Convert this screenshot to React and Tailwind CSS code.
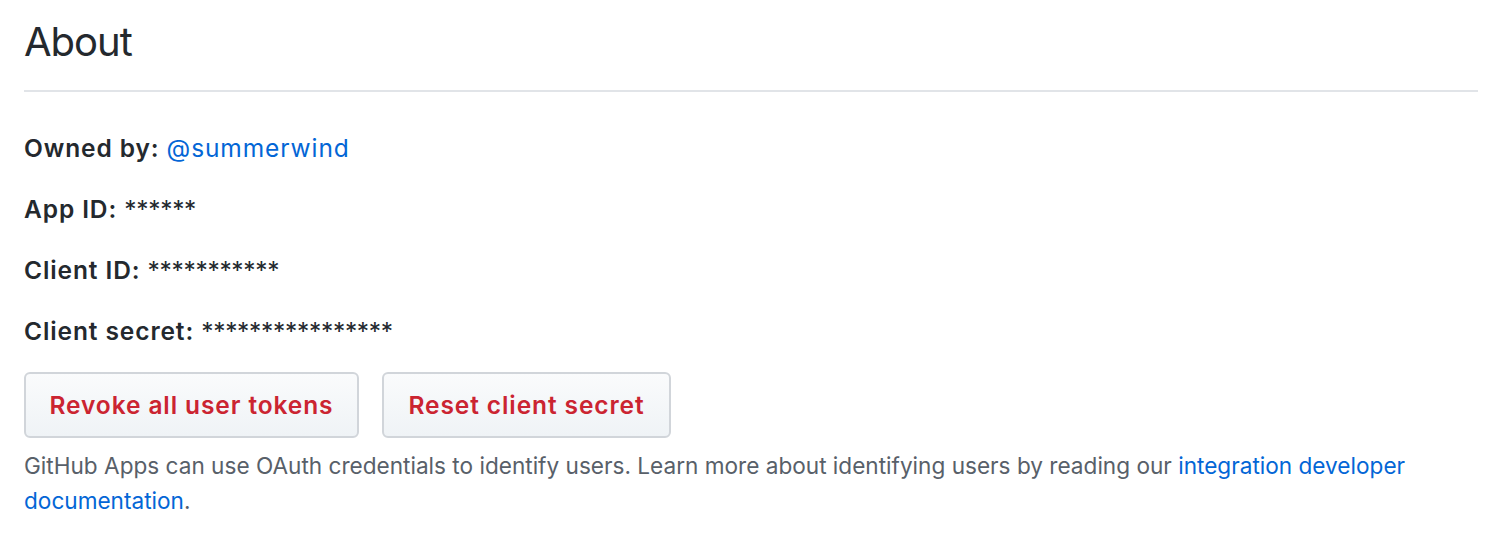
export default function App() {
  const font = { fontFamily: 'Inter, "Liberation Sans", Arial, sans-serif' };
  return (
    <div className="w-[1504px] h-[550px] bg-white px-[24px] pr-[26px] text-[#24292e]" style={font}>
      <div className="border-b-2 border-[#e1e4e8] h-[92px] flex items-end pb-[22px]">
        <h2 className="text-[40px] leading-[52px] font-normal tracking-[-1px]">About</h2>
      </div>
      <div className="pt-[38px]">
        <p className="text-[24.5px] leading-[36px] font-semibold tracking-[0.9px] mb-[25px]">
          Owned by: <a className="text-[#0366d6] font-normal">@summerwind</a>
        </p>
        <p className="text-[24.5px] leading-[36px] font-semibold tracking-[0.9px] mb-[25px]">
          App ID: <span className="font-normal tracking-[-0.3px]">******</span>
        </p>
        <p className="text-[24.5px] leading-[36px] font-semibold tracking-[0.9px] mb-[25px]">
          Client ID: <span className="font-normal tracking-[-0.3px]">***********</span>
        </p>
        <p className="text-[24.5px] leading-[36px] font-semibold tracking-[0.9px] mb-[23px]">
          Client secret: <span className="font-normal tracking-[-0.3px]">****************</span>
        </p>
        <div className="flex gap-[23px]">
          <button className="h-[66px] w-[335px] rounded-[6px] border-2 border-[#d1d5da] bg-gradient-to-b from-[#fafbfc] to-[#eff3f6] text-[#cb2431] text-[24.5px] font-semibold tracking-[0.9px]">
            Revoke all user tokens
          </button>
          <button className="h-[66px] w-[289px] rounded-[6px] border-2 border-[#d1d5da] bg-gradient-to-b from-[#fafbfc] to-[#eff3f6] text-[#cb2431] text-[24.5px] font-semibold tracking-[0.9px]">
            Reset client secret
          </button>
        </div>
        <p className="text-[22.6px] leading-[35px] text-[#586069] mt-[10px]">
          GitHub Apps can use OAuth credentials to identify users. Learn more about identifying users by reading our{" "}
          <a className="text-[#0366d6]">integration developer documentation</a>.
        </p>
      </div>
    </div>
  );
}
